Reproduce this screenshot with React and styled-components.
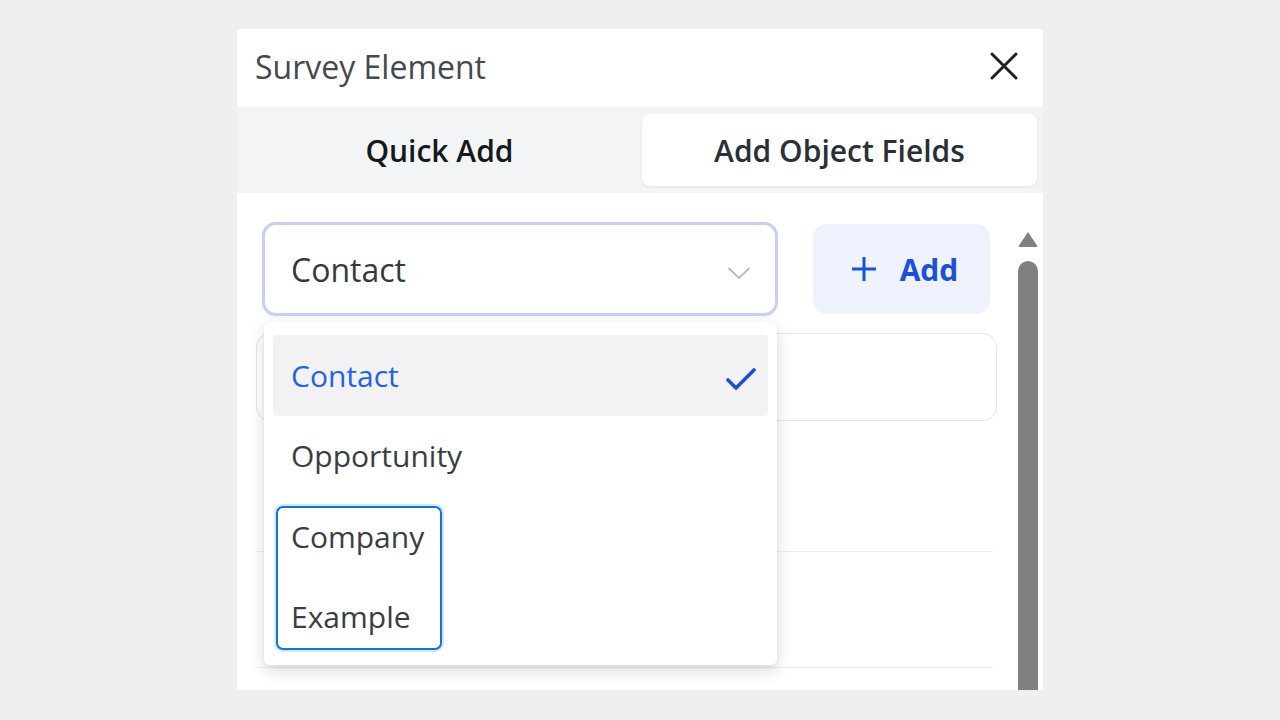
import React from "react";
import styled, { createGlobalStyle } from "styled-components";

const Global = createGlobalStyle`
  html, body { margin: 0; padding: 0; background: #efefef; }
  body { font-family: "Segoe UI", "Open Sans", "Noto Sans", sans-serif; }
  * { box-sizing: border-box; }
`;

const Stage = styled.div`
  width: 1280px;
  height: 720px;
  padding: 29px 0 0 237px;
  overflow: hidden;
`;

const Panel = styled.div`
  position: relative;
  width: 806px;
  height: 661px;
  background: #ffffff;
  display: flex;
  flex-direction: column;
  overflow: hidden;
`;

const Header = styled.div`
  height: 78px;
  flex: none;
  display: flex;
  align-items: center;
  justify-content: space-between;
  padding: 0 24px 4px 18px;
`;

const Title = styled.div`
  font-size: 32px;
  color: #45484f;
  letter-spacing: 0;
`;

const CloseBtn = styled.button`
  border: 0;
  background: none;
  padding: 0;
  width: 30px;
  height: 30px;
  display: flex;
  align-items: center;
  justify-content: center;
  cursor: pointer;
`;

const Tabs = styled.div`
  height: 86px;
  flex: none;
  background: #f3f4f6;
  display: grid;
  grid-template-columns: 405px 395px;
  padding: 7px 6px 7px 0;
`;

const Tab = styled.div`
  display: flex;
  align-items: center;
  justify-content: center;
  font-size: 30px;
  font-weight: 600;
  letter-spacing: 0;
  color: ${(p) => (p.$active ? "#2b2f36" : "#15181d")};
  background: ${(p) => (p.$active ? "#ffffff" : "transparent")};
  border-radius: 8px;
  box-shadow: ${(p) => (p.$active ? "0 1px 3px rgba(0,0,0,0.08)" : "none")};
`;

const Body = styled.div`
  flex: 1;
  display: flex;
  min-height: 0;
`;

const Content = styled.div`
  position: relative;
  flex: 1;
  padding: 29px 0 0 19px;
  display: flex;
  flex-direction: column;
`;

const TopRow = styled.div`
  display: flex;
  align-items: center;
  gap: 35px;
  padding-left: 6px;
`;

const SelectBox = styled.div`
  width: 516px;
  height: 94px;
  border: 3px solid #c5d0f2;
  border-radius: 14px;
  background: #ffffff;
  box-shadow: 0 1px 3px rgba(60, 80, 160, 0.08);
  display: flex;
  align-items: center;
  justify-content: space-between;
  padding: 0 24px 0 26px;
  font-size: 32px;
  color: #35383e;
`;

const AddButton = styled.button`
  width: 177px;
  height: 90px;
  border: 0;
  border-radius: 14px;
  background: #edf2fd;
  color: #1d4fd7;
  font-family: inherit;
  font-size: 30px;
  font-weight: 700;
  display: flex;
  align-items: center;
  justify-content: center;
  gap: 23px;
  padding: 0 0 0 6px;
`;

const FieldBox = styled.div`
  margin-top: 17px;
  width: 741px;
  height: 88px;
  border: 1.5px solid #e3e4e7;
  border-radius: 14px;
  flex: none;
`;

const Divider = styled.div`
  width: 737px;
  height: 1px;
  background: #eeeeef;
  margin-top: ${(p) => p.$top}px;
  flex: none;
`;

const Scrollbar = styled.div`
  width: 20px;
  flex: none;
  margin-right: 5px;
  padding-top: 39px;
  display: flex;
  flex-direction: column;
  align-items: center;
  gap: 14px;
`;

const ArrowUp = styled.div`
  width: 0;
  height: 0;
  border-left: 10px solid transparent;
  border-right: 10px solid transparent;
  border-bottom: 15px solid #808080;
  border-radius: 2px;
`;

const Thumb = styled.div`
  flex: 1;
  width: 20px;
  background: #808080;
  border-radius: 10px 10px 0 0;
`;

const Menu = styled.div`
  position: absolute;
  left: 27px;
  top: 129px;
  width: 513px;
  height: 343px;
  background: #ffffff;
  border-radius: 6px;
  box-shadow: 0 6px 16px rgba(0, 0, 0, 0.14), 0 1px 4px rgba(0, 0, 0, 0.06);
  padding: 13px 9px 7px 9px;
  display: flex;
  flex-direction: column;
`;

const Item = styled.div`
  height: 80.5px;
  flex: none;
  display: flex;
  align-items: center;
  justify-content: space-between;
  padding: 0 12px 0 18px;
  border-radius: 4px;
  font-size: 30px;
  color: ${(p) => (p.$selected ? "#2563e0" : "#3b3d42")};
  background: ${(p) => (p.$selected ? "#f2f2f4" : "transparent")};
`;

const FocusRing = styled.div`
  position: absolute;
  left: 12px;
  top: 184px;
  width: 166px;
  height: 144px;
  border: 2px solid #1573c9;
  border-radius: 7px;
  box-shadow: 0 0 0 2px rgba(120, 190, 250, 0.35);
  pointer-events: none;
`;

const items = ["Contact", "Opportunity", "Company", "Example"];

export default function App() {
  return (
    <>
      <Global />
      <Stage>
        <Panel>
          <Header>
            <Title>Survey Element</Title>
            <CloseBtn aria-label="Close">
              <svg width="28" height="28" viewBox="0 0 28 28">
                <path d="M2 2 L26 26 M26 2 L2 26" stroke="#1f2125" strokeWidth="3" strokeLinecap="round" />
              </svg>
            </CloseBtn>
          </Header>
          <Tabs>
            <Tab>Quick Add</Tab>
            <Tab $active>Add Object Fields</Tab>
          </Tabs>
          <Body>
            <Content>
              <TopRow>
                <SelectBox>
                  <span>Contact</span>
                  <svg width="24" height="14" viewBox="0 0 24 14" style={{ marginTop: 8 }}>
                    <path d="M1.5 2 L12 12 L22.5 2" fill="none" stroke="#b9bbc0" strokeWidth="1.8" />
                  </svg>
                </SelectBox>
                <AddButton>
                  <svg width="26" height="26" viewBox="0 0 26 26">
                    <path d="M13 1 V25 M1 13 H25" stroke="#1d4fd7" strokeWidth="3" />
                  </svg>
                  <span>Add</span>
                </AddButton>
              </TopRow>
              <FieldBox />
              <Divider $top={130} />
              <Divider $top={115} />
              <Menu>
                {items.map((it, i) => (
                  <Item key={it} $selected={i === 0}>
                    <span>{it}</span>
                    {i === 0 && (
                      <svg width="30" height="24" viewBox="0 0 30 24" style={{ marginTop: 8 }}>
                        <path d="M2 13 L10 21 L28 3" fill="none" stroke="#1d4fd7" strokeWidth="3.6" strokeLinecap="round" strokeLinejoin="round" />
                      </svg>
                    )}
                  </Item>
                ))}
                <FocusRing />
              </Menu>
            </Content>
            <Scrollbar>
              <ArrowUp />
              <Thumb />
            </Scrollbar>
          </Body>
        </Panel>
      </Stage>
    </>
  );
}
